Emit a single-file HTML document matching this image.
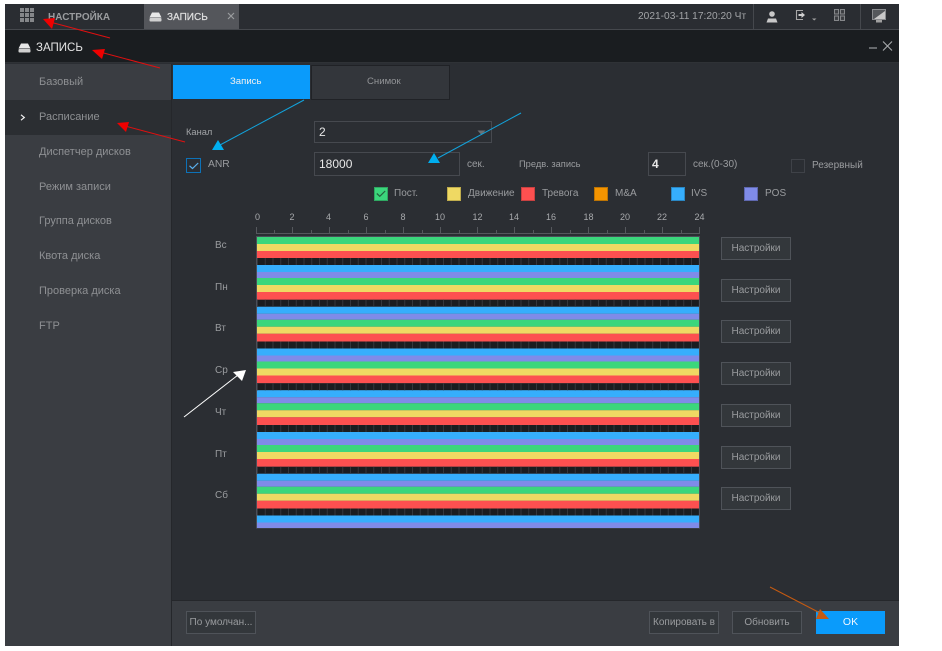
<!DOCTYPE html>
<html lang="ru"><head><meta charset="utf-8"><title>Запись</title>
<style>
html,body{margin:0;padding:0;background:#fff;width:942px;height:651px;overflow:hidden}
#w{position:relative;width:942px;height:651px;font-family:"Liberation Sans",sans-serif;color:#9a9c9f;filter:blur(.3px)}
.a{position:absolute;white-space:nowrap}
.b{position:absolute;box-sizing:border-box}
.btn{position:absolute;box-sizing:border-box;width:70px;height:23px;border:1px solid #4f5359;background:#33373b;color:#9a9c9f;font-size:10px;line-height:21px;text-align:center;white-space:nowrap}
.side{position:absolute;left:39px;font-size:11px;line-height:14px;color:#8e9093;white-space:nowrap}
.t{font-size:9.3px}
.l{font-size:10px;line-height:14px}
.sw{position:absolute;box-sizing:border-box;width:14px;height:14px;top:187px;border:1px solid}
</style></head><body><div id="w">
<div class="b" style="left:5px;top:4px;width:894px;height:642px;background:#2b2e33"></div>
<!-- top bar -->
<div class="b" style="left:5px;top:4px;width:894px;height:26px;background:#2a2d32;border-bottom:1px solid #45484d"></div>
<div class="b" style="left:144px;top:4px;width:95px;height:25px;background:#54565b"></div>
<div class="b" style="left:5px;top:30px;width:894px;height:33px;background:#1a1d20;border-bottom:1px solid #2f3236"></div>
<div class="b" style="left:753px;top:4px;width:1px;height:25px;background:#45484d"></div>
<div class="b" style="left:860px;top:4px;width:1px;height:25px;background:#45484d"></div>
<svg class="b" style="left:20px;top:8px" width="15" height="15"><g fill="#85878a"><rect x="0" y="0" width="4" height="4"/><rect x="5" y="0" width="4" height="4"/><rect x="10" y="0" width="4" height="4"/><rect x="0" y="5" width="4" height="4"/><rect x="5" y="5" width="4" height="4"/><rect x="10" y="5" width="4" height="4"/><rect x="0" y="10" width="4" height="4"/><rect x="5" y="10" width="4" height="4"/><rect x="10" y="10" width="4" height="4"/></g></svg>
<div class="a" style="left:48px;top:11px;font-size:10px;font-weight:bold;color:#9a9c9f;line-height:13px">НАСТРОЙКА</div>
<svg class="b" style="left:149px;top:12px" width="13" height="10"><path d="M3 0.5H10L12.5 5.5H0.5Z" fill="#e8e8e8"/><rect x="0.5" y="6" width="12" height="3.5" rx="1" fill="#d0d0d0"/></svg>
<div class="a" style="left:167px;top:11px;font-size:10px;color:#e0e0e0;line-height:13px;-webkit-text-stroke:.2px #e0e0e0">ЗАПИСЬ</div>
<svg class="b" style="left:227px;top:12px" width="8" height="8"><path d="M1 1L7 7M7 1L1 7" stroke="#9a9c9f" stroke-width="1.200"/></svg>
<div class="a" style="left:638px;top:10px;font-size:10.2px;color:#a2a4a7;line-height:14px">2021-03-11 17:20:20 Чт</div>
<svg class="b" style="left:766px;top:11px" width="12" height="12"><circle cx="6" cy="3" r="2.800" fill="#c8c8c8"/><path d="M0.500 11.500L2 7.500H10L11.500 11.500Z" fill="#c8c8c8"/></svg>
<svg class="b" style="left:795px;top:9px" width="22" height="13"><path d="M8 1.500H1.500V10.500H8" fill="none" stroke="#a8a8a8" stroke-width="1.100"/><path d="M3.500 5H6.500V3L10 6L6.500 9V7H3.500Z" fill="#d0d0d0"/><path d="M17 9.500H21.500L19.200 11.500Z" fill="#a0a0a0"/></svg>
<svg class="b" style="left:834px;top:9px" width="11" height="12"><g fill="#3a3c40" stroke="#85878a" stroke-width="1.100"><rect x="0.500" y="0.500" width="4" height="4.500"/><rect x="6.500" y="0.500" width="4" height="4.500"/><rect x="0.500" y="7" width="4" height="4.500"/><rect x="6.500" y="7" width="4" height="4.500"/></g></svg>
<svg class="b" style="left:872px;top:9px" width="14" height="15"><rect x="0.500" y="0.500" width="13" height="10" fill="#55585c" stroke="#8a8c8f"/><path d="M2 10L13 2V10Z" fill="#c8c8c8"/><rect x="4" y="11" width="6" height="2.500" fill="#a0a0a0"/></svg>
<!-- header -->
<svg class="b" style="left:18px;top:43px" width="13" height="10"><path d="M3 0.5H10L12.5 5.5H0.5Z" fill="#e8e8e8"/><rect x="0.5" y="6" width="12" height="3.5" rx="1" fill="#d0d0d0"/></svg>
<div class="a" style="left:36px;top:41px;font-size:11.5px;color:#e4e4e4;line-height:15px">ЗАПИСЬ</div>
<svg class="b" style="left:867px;top:40px" width="26" height="12"><path d="M2 8H10" stroke="#9a9c9f" stroke-width="1.200"/><path d="M16 1.500L25 10.500M25 1.500L16 10.500" stroke="#a8aaad" stroke-width="1.100"/></svg>
<!-- sidebar -->
<div class="b" style="left:5px;top:64px;width:167px;height:582px;background:#3a3d42;border-right:1px solid #25272b"></div>
<div class="b" style="left:5px;top:100px;width:166px;height:35px;background:#2b2e32"></div>
<svg class="b" style="left:20px;top:114px" width="6" height="7"><path d="M1 .800L4.300 3.500L1 6.200" fill="none" stroke="#f0f0f0" stroke-width="1.200"/></svg>
<div class="side" style="top:75px">Базовый</div>
<div class="side" style="top:110px">Расписание</div>
<div class="side" style="top:145px">Диспетчер дисков</div>
<div class="side" style="top:180px">Режим записи</div>
<div class="side" style="top:214px">Группа дисков</div>
<div class="side" style="top:249px">Квота диска</div>
<div class="side" style="top:284px">Проверка диска</div>
<div class="side" style="top:319px">FTP</div>
<!-- tabs -->
<div class="b" style="left:173px;top:65px;width:137px;height:34px;background:#0a9bfb"></div>
<div class="a" style="left:230px;top:75px;font-size:9.6px;line-height:13px;color:#f0f0f0">Запись</div>
<div class="b" style="left:311px;top:65px;width:139px;height:35px;background:#33363b;border:1px solid #202226"></div>
<div class="a" style="left:367px;top:75px;font-size:9.6px;line-height:13px;color:#929497">Снимок</div>
<!-- form -->
<div class="a t" style="left:186px;top:126px;line-height:12px;color:#a2a4a7">Канал</div>
<div class="b" style="left:314px;top:121px;width:178px;height:22px;border:1px solid #46494f"></div>
<div class="a" style="left:319px;top:125px;font-size:12px;line-height:15px;color:#e8e8e8">2</div>
<svg class="b" style="left:477px;top:130px" width="9" height="6"><path d="M0.500 0.500H8.500L4.500 5Z" fill="#6c6f73"/></svg>
<div class="b" style="left:186px;top:158px;width:15px;height:15px;border:1px solid #0d72b8"></div>
<svg class="b" style="left:189px;top:162px" width="10" height="8"><path d="M0.500 3.800L3.500 6.500L9.200 1" fill="none" stroke="#5ab0ee" stroke-width="1.200"/></svg>
<div class="a" style="left:208px;top:158px;font-size:10.300px;line-height:14px">ANR</div>
<div class="b" style="left:314px;top:152px;width:146px;height:24px;border:1px solid #46494f"></div>
<div class="a" style="left:319px;top:156px;font-size:12px;line-height:16px;color:#e8e8e8">18000</div>
<div class="a l" style="left:467px;top:158px">сек.</div>
<div class="a t" style="left:519px;top:158px;line-height:12px">Предв. запись</div>
<div class="b" style="left:648px;top:152px;width:38px;height:24px;border:1px solid #46494f"></div>
<div class="a" style="left:652px;top:157px;font-size:12px;font-weight:bold;line-height:15px;color:#e8e8e8">4</div>
<div class="a l" style="left:693px;top:158px">сек.(0-30)</div>
<div class="b" style="left:791px;top:159px;width:14px;height:14px;border:1px solid #3f4248"></div>
<div class="a l" style="left:812px;top:159px">Резервный</div>
<!-- legend -->
<div class="sw" style="left:374px;background:#3bd67c;border-color:#2fa862"></div>
<svg class="b" style="left:376px;top:190px" width="10" height="8"><path d="M0.800 3.500L3.800 6.300L9.200 1" fill="none" stroke="#25613d" stroke-width="1.200"/></svg>
<div class="a l" style="left:394px;top:187px">Пост.</div>
<div class="sw" style="left:447px;background:#efd963;border-color:#c0ad4d"></div>
<div class="a l" style="left:468px;top:187px">Движение</div>
<div class="sw" style="left:521px;background:#fd5050;border-color:#c94141"></div>
<div class="a l" style="left:542px;top:187px">Тревога</div>
<div class="sw" style="left:594px;background:#f49400;border-color:#bd7404"></div>
<div class="a l" style="left:615px;top:187px">M&amp;A</div>
<div class="sw" style="left:671px;background:#36aefc;border-color:#2a87c4"></div>
<div class="a l" style="left:691px;top:187px">IVS</div>
<div class="sw" style="left:744px;background:#7f8be8;border-color:#5f68b0"></div>
<div class="a l" style="left:765px;top:187px">POS</div>
<!-- chart -->
<svg class="b" style="left:0;top:0" width="942" height="651" font-family="Liberation Sans" font-size="9" fill="#a8aaad">
<g text-anchor="middle">
<text x="257.500" y="220">0</text><text x="292" y="220">2</text><text x="328.500" y="220">4</text><text x="366" y="220">6</text><text x="403" y="220">8</text><text x="440" y="220">10</text><text x="477.500" y="220">12</text><text x="514" y="220">14</text><text x="551" y="220">16</text><text x="588.500" y="220">18</text><text x="625" y="220">20</text><text x="662" y="220">22</text><text x="699.500" y="220">24</text>
</g>
<path d="M256 233.500H700M256.500 227V233M292.500 227V233M329.500 227V233M366.500 227V233M403.500 227V233M440.500 227V233M477.500 227V233M514.500 227V233M551.500 227V233M588.500 227V233M625.500 227V233M662.500 227V233M699.500 227V233M274.500 230V233M311.500 230V233M348.500 230V233M385.500 230V233M422.500 230V233M459.500 230V233M496.500 230V233M533.500 230V233M570.500 230V233M607.500 230V233M644.500 230V233M681.500 230V233" stroke="#55585d" stroke-width="1" fill="none"/>
<rect x="256" y="236" width="444" height="292.500" fill="#4a4e58"/>
<rect x="257" y="237" width="442" height="7" fill="#3bd67c"/><rect x="257" y="244" width="442" height="7" fill="#efd963"/><rect x="257" y="251" width="442" height="7" fill="#fd5050"/>
<g>
<g><rect x="257" y="258" width="442" height="7" fill="#1b1d20"/><rect x="257" y="265" width="442" height="7" fill="#36aefc"/><rect x="257" y="272" width="442" height="6" fill="#7f8be8"/><rect x="257" y="278" width="442" height="7" fill="#3bd67c"/><rect x="257" y="285" width="442" height="7" fill="#efd963"/><rect x="257" y="292" width="442" height="7.750" fill="#fd5050"/></g>
<g><rect x="257" y="299.750" width="442" height="7" fill="#1b1d20"/><rect x="257" y="306.750" width="442" height="7" fill="#36aefc"/><rect x="257" y="313.750" width="442" height="6" fill="#7f8be8"/><rect x="257" y="319.750" width="442" height="7" fill="#3bd67c"/><rect x="257" y="326.750" width="442" height="7" fill="#efd963"/><rect x="257" y="333.750" width="442" height="7.750" fill="#fd5050"/></g>
<g><rect x="257" y="341.500" width="442" height="7" fill="#1b1d20"/><rect x="257" y="348.500" width="442" height="7" fill="#36aefc"/><rect x="257" y="355.500" width="442" height="6" fill="#7f8be8"/><rect x="257" y="361.500" width="442" height="7" fill="#3bd67c"/><rect x="257" y="368.500" width="442" height="7" fill="#efd963"/><rect x="257" y="375.500" width="442" height="7.750" fill="#fd5050"/></g>
<g><rect x="257" y="383.250" width="442" height="7" fill="#1b1d20"/><rect x="257" y="390.250" width="442" height="7" fill="#36aefc"/><rect x="257" y="397.250" width="442" height="6" fill="#7f8be8"/><rect x="257" y="403.250" width="442" height="7" fill="#3bd67c"/><rect x="257" y="410.250" width="442" height="7" fill="#efd963"/><rect x="257" y="417.250" width="442" height="7.750" fill="#fd5050"/></g>
<g><rect x="257" y="425" width="442" height="7" fill="#1b1d20"/><rect x="257" y="432" width="442" height="7" fill="#36aefc"/><rect x="257" y="439" width="442" height="6" fill="#7f8be8"/><rect x="257" y="445" width="442" height="7" fill="#3bd67c"/><rect x="257" y="452" width="442" height="7" fill="#efd963"/><rect x="257" y="459" width="442" height="7.750" fill="#fd5050"/></g>
<g><rect x="257" y="466.750" width="442" height="7" fill="#1b1d20"/><rect x="257" y="473.750" width="442" height="7" fill="#36aefc"/><rect x="257" y="480.750" width="442" height="6" fill="#7f8be8"/><rect x="257" y="486.750" width="442" height="7" fill="#3bd67c"/><rect x="257" y="493.750" width="442" height="7" fill="#efd963"/><rect x="257" y="500.750" width="442" height="7.750" fill="#fd5050"/></g>
<g><rect x="257" y="508.500" width="442" height="7" fill="#1b1d20"/><rect x="257" y="515.500" width="442" height="7" fill="#36aefc"/><rect x="257" y="522.500" width="442" height="5.500" fill="#7f8be8"/></g>
</g>
<path d="M257 261.500H699M257 303.250H699M257 345H699M257 386.750H699M257 428.500H699M257 470.250H699M257 512H699" stroke="#34373c" stroke-width="7" stroke-dasharray="1 6.750" fill="none"/>
</svg>
<div class="a l" style="left:215px;top:239px">Вс</div>
<div class="a l" style="left:215px;top:281px">Пн</div>
<div class="a l" style="left:215px;top:322px">Вт</div>
<div class="a l" style="left:215px;top:364px">Ср</div>
<div class="a l" style="left:215px;top:406px">Чт</div>
<div class="a l" style="left:215px;top:448px">Пт</div>
<div class="a l" style="left:215px;top:489px">Сб</div>
<div class="btn" style="left:721px;top:237px">Настройки</div>
<div class="btn" style="left:721px;top:279px">Настройки</div>
<div class="btn" style="left:721px;top:320px">Настройки</div>
<div class="btn" style="left:721px;top:362px">Настройки</div>
<div class="btn" style="left:721px;top:404px">Настройки</div>
<div class="btn" style="left:721px;top:446px">Настройки</div>
<div class="btn" style="left:721px;top:487px">Настройки</div>
<!-- footer -->
<div class="b" style="left:172px;top:600px;width:727px;height:46px;background:#3a3d42;border-top:1px solid #25272b"></div>
<div class="btn" style="left:186px;top:611px">По умолчан...</div>
<div class="btn" style="left:649px;top:611px">Копировать в</div>
<div class="btn" style="left:732px;top:611px">Обновить</div>
<div class="b" style="left:816px;top:611px;width:69px;height:23px;background:#0a9bfb;color:#eef6ff;font-size:10.500px;line-height:23px;text-align:center">OK</div>
<!-- arrows -->
<svg class="b" style="left:0;top:0" width="942" height="651" fill="none">
<path d="M50 22L110 38" stroke="#e01010"/><polygon points="43,19 55,18 52,29" fill="#f00000"/>
<path d="M100 52L160 68" stroke="#e01010"/><polygon points="92,50 105,49 102,59" fill="#f00000"/>
<path d="M125 126L185 142" stroke="#e01010"/><polygon points="117,123 129,122 126,132" fill="#f00000"/>
<path d="M304 100L220 145" stroke="#12a3dc"/><polygon points="218,140 212,150 224,150" fill="#00aeef"/>
<path d="M521 113L438 158" stroke="#12a3dc"/><polygon points="434,153 428,163 440,163" fill="#00aeef"/>
<path d="M184 417L238 375" stroke="#ffffff"/><polygon points="246,370 233,372 242,381" fill="#ffffff"/>
<path d="M770 587L822 614" stroke="#c55a11"/><polygon points="820,609 816,619 829,619" fill="#c55a11"/>
</svg>
</div></body></html>
